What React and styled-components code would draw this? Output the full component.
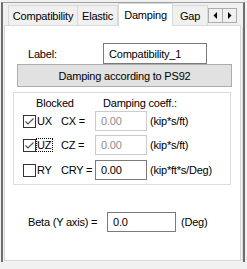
import styled, { createGlobalStyle } from "styled-components"

const Global = createGlobalStyle`
  body {
    margin: 0;
    background: #f0f0f0;
    font-family: "Liberation Sans", Arial, sans-serif;
    font-size: 11px;
    letter-spacing: -0.2px;
    color: #000;
  }
`

const Window = styled.div`
  margin: 2px 0 0 1px;
  width: 240px;
  height: 259px;
  border-left: 2px solid #6d6d6d;
  border-right: 2px solid #6d6d6d;
  border-top: 1px solid #a0a0a0;
`

const TabStrip = styled.div`
  display: flex;
  align-items: flex-end;
  height: 22px;
  padding-left: 5px;
`

const Tab = styled.div`
  box-sizing: border-box;
  width: ${p => p.w}px;
  height: ${p => (p.active ? 23 : 20)}px;
  margin-bottom: ${p => (p.active ? -1 : 0)}px;
  position: relative;
  z-index: ${p => (p.active ? 1 : 0)};
  display: flex;
  align-items: center;
  justify-content: center;
  padding-top: ${p => (p.active ? 0 : 1)}px;
  background: ${p => (p.active ? "#fff" : "#f0f0f0")};
  border: 1px solid #d9d9d9;
  border-bottom: none;
  border-left: ${p => (p.first || p.active ? "1px solid #d9d9d9" : "none")};
`

const Scroller = styled.div`
  display: flex;
  align-self: flex-start;
  margin-top: 5px;
`

const ScrollBtn = styled.div`
  box-sizing: border-box;
  width: 15px;
  height: 15px;
  display: flex;
  align-items: center;
  justify-content: center;
  background: #f0f0f0;
  border: 1px solid #adadad;
  margin-left: ${p => (p.second ? -1 : 0)}px;
`

const Panel = styled.div`
  box-sizing: border-box;
  margin-left: 1px;
  width: 237px;
  height: 236px;
  background: #fff;
  border: 1px solid #d9d9d9;
  box-shadow: 1px 1px 0 #f4f4f4, 2px 2px 0 #dcdcdc;
  padding-top: 17px;
`

const LabelRow = styled.div`
  display: flex;
  align-items: center;
  padding-left: 23px;
`

const Caption = styled.span`
  width: ${p => p.w}px;
`

const Field = styled.div`
  box-sizing: border-box;
  width: ${p => p.w}px;
  height: ${p => p.h || 20}px;
  display: flex;
  align-items: center;
  padding-left: 5px;
  background: #fff;
  border: 1px solid ${p => (p.disabled ? "#cccccc" : "#7a7a7a")};
  color: ${p => (p.disabled ? "#8d8d8d" : "#000")};
`

const Button = styled.div`
  box-sizing: border-box;
  margin-left: 12px;
  width: 215px;
  height: 23px;
  display: flex;
  align-items: center;
  justify-content: center;
  background: #e1e1e1;
  border: 1px solid #adadad;
`

const Group = styled.div`
  box-sizing: border-box;
  margin: 5px 0 0 8px;
  width: 218px;
  height: 93px;
  border: 1px solid #dcdcdc;
  padding: 3px 0 0 9px;
`

const Header = styled.div`
  display: flex;
  height: 14px;
  align-items: center;
  padding-left: 13px;
`

const Row = styled.div`
  display: flex;
  align-items: center;
  height: 20px;
  margin-top: ${p => p.top}px;
`

const Box = styled.div`
  box-sizing: border-box;
  width: 13px;
  height: 13px;
  border: 1px solid #333;
  background: #fff;
  display: flex;
`

const AxisCell = styled.div`
  width: 25px;
`

const Focus = styled.span`
  display: inline-block;
  line-height: 12px;
  padding-right: 1px;
  border: 1px ${p => (p.focused ? "dotted #000" : "solid transparent")};
`

const Unit = styled.span`
  margin-left: ${p => p.gap}px;
`

const BetaRow = styled.div`
  display: flex;
  align-items: center;
  margin-top: 27px;
  padding-left: 23px;
`

const Check = ({ checked }) => (
  <Box>
    {checked && (
      <svg width="11" height="11" viewBox="0 0 11 11">
        <path d="M1.5 5.5 L4 8 L9.5 2.5" fill="none" stroke="#505050" strokeWidth="1.1" />
      </svg>
    )}
  </Box>
)

const Arrow = ({ dir }) => (
  <svg width="5" height="7" viewBox="0 0 5 7">
    {dir === "left" ? <path d="M4 0 L4 7 L0.5 3.5 Z" fill="#000" /> : <path d="M1 0 L1 7 L4.5 3.5 Z" fill="#000" />}
  </svg>
)

const rows = [
  { axis: "UX", coef: "CX =", checked: true, disabled: true, unit: "(kip*s/ft)", top: 1 },
  { axis: "UZ", coef: "CZ =", checked: true, disabled: true, unit: "(kip*s/ft)", top: 4, focused: true },
  { axis: "RY", coef: "CRY =", checked: false, disabled: false, unit: "(kip*ft*s/Deg)", top: 5 },
]

export default function App() {
  return (
    <>
      <Global />
      <Window>
        <TabStrip>
          <Tab w={70} first>Compatibility</Tab>
          <Tab w={40}>Elastic</Tab>
          <Tab w={55} active>Damping</Tab>
          <Tab w={35}>Gap</Tab>
          <Scroller>
            <ScrollBtn><Arrow dir="left" /></ScrollBtn>
            <ScrollBtn second><Arrow dir="right" /></ScrollBtn>
          </Scroller>
        </TabStrip>
        <Panel>
          <LabelRow>
            <Caption w={75}>Label:</Caption>
            <Field w={104} h={21}>Compatibility_1</Field>
          </LabelRow>
          <Button>Damping according to PS92</Button>
          <Group>
            <Header>
              <Caption w={67}>Blocked</Caption>
              <span>Damping coeff.:</span>
            </Header>
            {rows.map(r => (
              <Row key={r.axis} top={r.top}>
                <Check checked={r.checked} />
                <AxisCell>
                  <Focus focused={r.focused}>{r.axis}</Focus>
                </AxisCell>
                <Caption w={34}>{r.coef}</Caption>
                <Field w={52} disabled={r.disabled}>0.00</Field>
                <Unit gap={3}>{r.unit}</Unit>
              </Row>
            ))}
          </Group>
          <BetaRow>
            <Caption w={79}>Beta (Y axis) =</Caption>
            <Field w={69}>0.0</Field>
            <Unit gap={5}>(Deg)</Unit>
          </BetaRow>
        </Panel>
      </Window>
    </>
  )
}
